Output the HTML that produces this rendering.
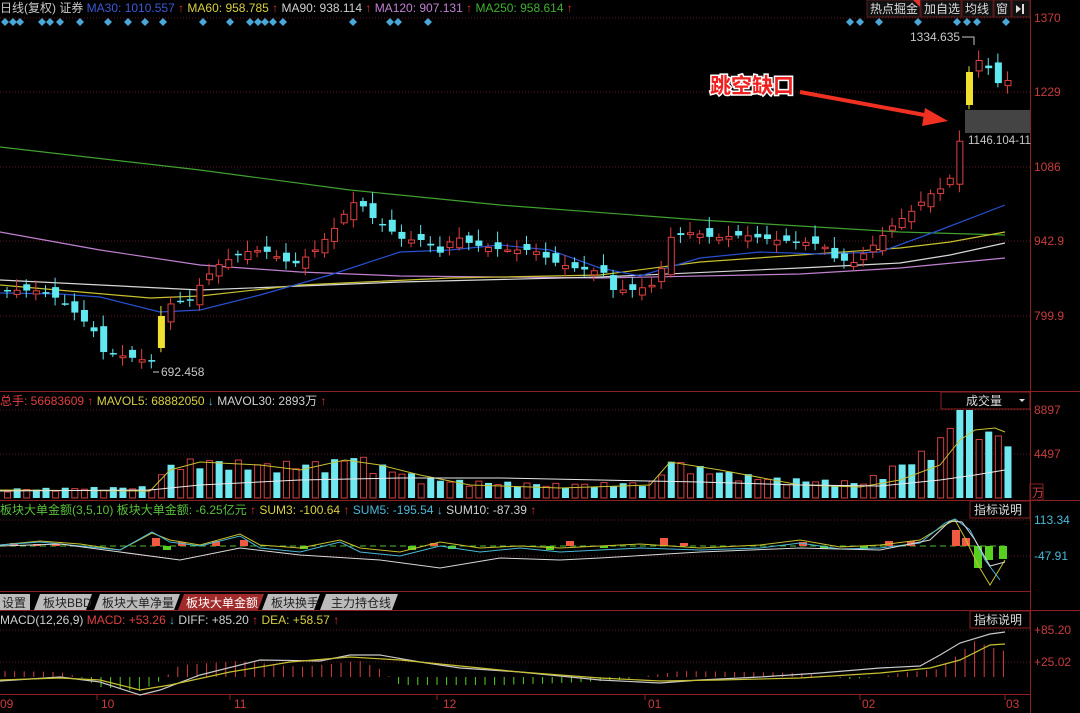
<!DOCTYPE html>
<html><head><meta charset="utf-8">
<style>
html,body{margin:0;padding:0;background:#000;width:1080px;height:713px;overflow:hidden}
svg{display:block;font-family:"Liberation Sans","Noto Sans CJK SC",sans-serif}
</style></head>
<body>
<svg id="s" width="1080" height="713" viewBox="0 0 1080 713" xmlns="http://www.w3.org/2000/svg">
<rect width="1080" height="713" fill="#000"/>
<g id="grid" stroke="#5a1a1a" stroke-dasharray="1,2" stroke-width="1">
<line x1="0" y1="18" x2="1030" y2="18"/><line x1="0" y1="92" x2="1030" y2="92"/>
<line x1="0" y1="167" x2="1030" y2="167"/><line x1="0" y1="241" x2="1030" y2="241"/>
<line x1="0" y1="316" x2="1030" y2="316"/>
<line x1="0" y1="410" x2="1030" y2="410"/><line x1="0" y1="454" x2="1030" y2="454"/>
<line x1="0" y1="520" x2="1030" y2="520"/><line x1="0" y1="556" x2="1030" y2="556"/>
<line x1="0" y1="630" x2="1030" y2="630"/><line x1="0" y1="662" x2="1030" y2="662"/>
</g>
<g stroke="#8a2020" stroke-width="1" fill="none">
<line x1="1030.5" y1="0" x2="1030.5" y2="713"/>
<line x1="0" y1="391.5" x2="1080" y2="391.5"/>
<line x1="0" y1="500.5" x2="1080" y2="500.5"/>
<line x1="0" y1="591.5" x2="1030" y2="591.5"/>
<line x1="0" y1="610.5" x2="1080" y2="610.5"/>
<line x1="0" y1="694.5" x2="1030" y2="694.5"/>
<line x1="97" y1="694" x2="97" y2="700"/><line x1="230" y1="694" x2="230" y2="700"/>
<line x1="437" y1="694" x2="437" y2="700"/><line x1="645" y1="694" x2="645" y2="700"/>
<line x1="860" y1="694" x2="860" y2="700"/><line x1="1005" y1="694" x2="1005" y2="700"/>
</g>
<g id="ma" fill="none" stroke-width="1.2"></g>
<g id="cd"></g>
<g id="vol"></g>
<g id="ind"></g>
<g id="macd"></g>
<text y="12" font-size="12">
<tspan x="0" fill="#c8c8c8">日线(复权) 证券 </tspan><tspan fill="#3c5ad8">MA30: 1010.557</tspan><tspan fill="#e03030" font-weight="bold"> ↑ </tspan><tspan fill="#d8d040">MA60: 958.785</tspan><tspan fill="#e03030" font-weight="bold"> ↑ </tspan><tspan fill="#d0d0d0">MA90: 938.114</tspan><tspan fill="#e03030" font-weight="bold"> ↑ </tspan><tspan fill="#c080d0">MA120: 907.131</tspan><tspan fill="#e03030" font-weight="bold"> ↑ </tspan><tspan fill="#40b030">MA250: 958.614</tspan><tspan fill="#e03030" font-weight="bold"> ↑</tspan>
</text>
<g id="dia" fill="#4aa8d8"></g>
<g font-size="12" fill="#ddd">
<rect x="867" y="0" width="53" height="17" fill="#111" stroke="#5a1a1a"/><text x="870" y="13">热点掘金</text>
<path d="M913 0 h7 v7z" fill="#e03030"/>
<rect x="921" y="0" width="40" height="17" fill="#111" stroke="#5a1a1a"/><text x="924" y="13">加自选</text>
<rect x="962" y="0" width="31" height="17" fill="#111" stroke="#5a1a1a"/><text x="965" y="13">均线</text>
<rect x="994" y="0" width="17" height="17" fill="#111" stroke="#5a1a1a"/><text x="996" y="13">窗</text>
<rect x="1012" y="0" width="18" height="17" fill="#111" stroke="#5a1a1a"/>
<path d="M1016 5 l5 4 l-5 4z M1022 4 v10 h2 v-10z" fill="#ddd"/>
</g>
<g font-size="12" fill="#c83c3c">
<text x="1034" y="22">1370</text><text x="1034" y="96">1229</text><text x="1034" y="171">1086</text>
<text x="1034" y="245">942.9</text><text x="1034" y="320">799.9</text>
<text x="1034" y="414">8897</text><text x="1034" y="458">4497</text>
<text x="1032" y="497">万</text>
<text x="1034" y="524" fill="#4ab8d8">113.34</text><text x="1034" y="560" fill="#4ab8d8">-47.91</text>
<text x="1034" y="634">+85.20</text><text x="1034" y="666">+25.02</text>
</g>
<rect x="1030" y="484" width="13" height="16" fill="none" stroke="#8a2020"/>
<g font-size="12" fill="#c83c3c">
<text x="0" y="708">09</text><text x="101" y="708">10</text><text x="234" y="708">11</text>
<text x="443" y="708">12</text><text x="648" y="708">01</text><text x="862" y="708">02</text><text x="1006" y="708">03</text>
</g>
<text x="910" y="41" font-size="12" fill="#c8c8c8">1334.635</text>
<path d="M962 37 h12 v8" stroke="#c8c8c8" fill="none"/>
<text x="161" y="376" font-size="12" fill="#c8c8c8">692.458</text>
<path d="M159 372 h-6" stroke="#c8c8c8"/>
<rect x="965" y="110" width="65" height="23" fill="#444"/>
<text x="968" y="144" font-size="11.5" fill="#c8c8c8">1146.104-11</text>
<text x="710" y="93" font-size="21" font-weight="bold" fill="#f02020" stroke="#fff" stroke-width="3" paint-order="stroke" font-family="'Noto Sans CJK SC',sans-serif">跳空缺口</text>
<path d="M800 92 L930 116" stroke="#f03020" stroke-width="4"/>
<path d="M948 121 L925 108 L922 126 Z" fill="#f03020"/>
<text y="405" font-size="12"><tspan x="0" fill="#e04040">总手: 56683609</tspan><tspan fill="#e03030" font-weight="bold"> ↑ </tspan><tspan fill="#d8d040">MAVOL5: 68882050</tspan><tspan fill="#4ab8d8" font-weight="bold"> ↓ </tspan><tspan fill="#d0d0d0">MAVOL30: 2893万</tspan><tspan fill="#e03030" font-weight="bold"> ↑</tspan></text>
<rect x="941" y="392" width="89" height="17" fill="#000" stroke="#8a2020"/>
<text x="966" y="405" font-size="12" fill="#ddd">成交量</text><path d="M1019 399 h6 l-3 3z" fill="#ddd"/>
<text y="514" font-size="12"><tspan x="0" fill="#5ac03a">板块大单金额(3,5,10) 板块大单金额: -6.25亿元</tspan><tspan fill="#e03030" font-weight="bold"> ↑ </tspan><tspan fill="#d8d040">SUM3: -100.64</tspan><tspan fill="#e03030" font-weight="bold"> ↑ </tspan><tspan fill="#4ab8d8">SUM5: -195.54</tspan><tspan fill="#4ab8d8" font-weight="bold"> ↓ </tspan><tspan fill="#d0d0d0">SUM10: -87.39</tspan><tspan fill="#e03030" font-weight="bold"> ↑</tspan></text>
<rect x="970" y="501" width="60" height="17" fill="#000" stroke="#8a2020"/><text x="974" y="514" font-size="12" fill="#ddd">指标说明</text>
<rect x="970" y="611" width="60" height="17" fill="#000" stroke="#8a2020"/><text x="974" y="624" font-size="12" fill="#ddd">指标说明</text>
<g font-size="12">
<rect x="0" y="594" width="30" height="16" fill="#bbb"/><text x="2" y="607" fill="#222">设置</text>
<path d="M34 610 l6 -16 h52 l-6 16z" fill="#bbb"/><text x="43" y="607" fill="#222">板块BBD</text>
<path d="M94 610 l6 -16 h80 l-6 16z" fill="#bbb"/><text x="102" y="607" fill="#222">板块大单净量</text>
<path d="M178 610 l6 -16 h80 l-6 16z" fill="#a02a2a"/><text x="186" y="607" fill="#fff">板块大单金额</text>
<path d="M262 610 l6 -16 h52 l-6 16z" fill="#bbb"/><text x="271" y="607" fill="#222">板块换手</text>
<path d="M320 610 l6 -16 h72 l-6 16z" fill="#bbb"/><text x="331" y="607" fill="#222">主力持仓线</text>
</g>
<text y="624" font-size="12"><tspan x="0" fill="#d0d0d0">MACD(12,26,9) </tspan><tspan fill="#e04040">MACD: +53.26</tspan><tspan fill="#4ab8d8" font-weight="bold"> ↓ </tspan><tspan fill="#d0d0d0">DIFF: +85.20</tspan><tspan fill="#e03030" font-weight="bold"> ↑ </tspan><tspan fill="#d8d040">DEA: +58.57</tspan><tspan fill="#e03030" font-weight="bold"> ↑</tspan></text>
</svg>
<script>
var NS="http://www.w3.org/2000/svg";
function el(p,t,a){var e=document.createElementNS(NS,t);for(var k in a)e.setAttribute(k,a[k]);p.appendChild(e);return e;}
function interp(pts,x){for(var i=0;i<pts.length-1;i++){if(x<=pts[i+1][0]){var a=pts[i],b=pts[i+1];return a[1]+(b[1]-a[1])*(x-a[0])/(b[0]-a[0]);}}return pts[pts.length-1][1];}
function poly(g,pts,c,w){el(g,"polyline",{points:pts.map(function(p){return p.join(",")}).join(" "),stroke:c,"stroke-width":w||1.2,fill:"none"});}
var dg=document.getElementById("dia");
[5,13,20,42,50,60,80,108,128,145,163,203,230,250,258,265,273,283,353,390,398,428,850,860,879,918,957,967,977,1006].forEach(function(x){el(dg,"path",{d:"M"+x+" 18 l4 4 l-4 4 l-4 -4z"});});
var mg=document.getElementById("ma");
poly(mg,[[0,147],[200,170],[350,190],[500,205],[700,220],[900,232],[1005,235]],"#40a030");
poly(mg,[[0,232],[100,250],[200,265],[300,272],[400,276],[600,278],[800,274],[900,268],[1005,258]],"#c080d0");
poly(mg,[[0,280],[200,290],[400,282],[600,277],[800,268],[900,263],[950,255],[1005,243]],"#d8d8d8");
poly(mg,[[0,285],[150,298],[200,296],[300,285],[450,278],[600,275],[700,262],[800,255],[900,248],[950,242],[1005,232]],"#c8c030");
poly(mg,[[0,293],[60,294],[100,297],[160,312],[200,310],[260,295],[330,275],[400,252],[450,250],[500,245],[550,250],[600,268],[640,276],[660,270],[700,258],[760,252],[820,254],[880,252],[940,230],[1005,205]],"#2850d0");
var cl=[[4,290],[40,291],[60,302],[90,330],[100,352],[130,358],[150,362],[160,316],[170,300],[185,302],[200,280],[215,265],[240,252],[260,250],[290,265],[310,252],[330,230],[345,208],[355,198],[365,215],[380,225],[400,240],[420,240],[440,255],[450,235],[470,245],[500,250],[530,250],[550,262],[570,268],[600,272],[610,290],[630,290],[650,285],[660,265],[665,238],[690,232],[710,238],[740,235],[770,240],[800,242],[820,245],[830,258],[850,263],[870,245],[890,225],[910,210],[925,195],[945,185],[958,135],[968,90],[975,60],[990,72],[997,88],[1005,80]];
var cg=document.getElementById("cd");
var prev=290,N=105,sp=9.62;
for(var i=0;i<N;i++){var x=4+i*sp;if(x>1008)break;var c=interp(cl,x);
 var o=prev+Math.sin(i*2.3)*6;
 if(i==16){o=348;c=316;}
 if(x>964&&x<972){o=105;c=72;}
 var hi=Math.min(o,c)-3-Math.abs(Math.sin(i*1.7))*8, lo=Math.max(o,c)+2+Math.abs(Math.cos(i*1.3))*6;
 var up=c<o, col=(i==16||(x>964&&x<972))?"#f0e030":(up?"#e04040":"#60e8f0");
 el(cg,"line",{x1:x+3,y1:hi,x2:x+3,y2:lo,stroke:col});
 var t=Math.min(o,c),h=Math.max(Math.abs(o-c),1.5);
 if(up&&col=="#e04040")el(cg,"rect",{x:x+0.5,y:t,width:6,height:h,fill:"#000",stroke:col});
 else el(cg,"rect",{x:x,y:t,width:7,height:h,fill:col});
 prev=c;}
var vg=document.getElementById("vol");
var vh=[[0,8],[150,10],[165,30],[200,34],[260,30],[330,32],[345,40],[380,28],[420,18],[460,15],[560,12],[650,14],[665,34],[700,26],[760,18],[860,14],[880,24],[920,40],[940,55],[955,75],[965,90],[975,68],[990,55],[1005,58]];
for(var i=0;i<N;i++){var x=4+i*sp;if(x>1008)break;var h=interp(vh,x)*(0.75+0.45*Math.abs(Math.sin(i*1.9)));
 var up=Math.sin(i*2.3)<0.1; if(x>955&&x<972){h=88;up=false;}
 if(up)el(vg,"rect",{x:x+0.5,y:498-h,width:6,height:h,fill:"#000",stroke:"#d04040"});
 else el(vg,"rect",{x:x,y:498-h,width:7,height:h,fill:"#70e8f0"});}
poly(vg,[[0,490],[150,491],[170,470],[200,462],[260,465],[300,470],[345,460],[380,465],[420,475],[470,485],[560,488],[650,485],[670,462],[720,470],[800,485],[860,487],[900,480],[940,465],[960,440],[975,430],[995,428],[1005,432]],"#c8c030",1);
poly(vg,[[0,491],[150,490],[200,485],[300,480],[400,478],[500,478],[600,480],[700,482],[800,485],[880,486],[940,480],[975,475],[1005,470]],"#e8e8e8",1);
var ig=document.getElementById("ind");
el(ig,"line",{x1:0,y1:546,x2:1005,y2:546,stroke:"#50c030","stroke-dasharray":"6,4"});
[[10,-3],[33,-2],[52,-2],[152,-8],[163,4],[178,-4],[212,-5],[240,-6],[300,3],[408,4],[430,-3],[448,3],[546,4],[566,-5],[600,2],[660,-8],[680,-3],[799,-4],[820,3],[860,3],[885,-5],[907,-5],[952,-16],[962,-8],[974,22],[985,14],[999,13]].forEach(function(b){var c=b[1]<0?"#f05a40":"#58d020";el(ig,"rect",{x:b[0],y:b[1]<0?546+b[1]:546,width:8,height:Math.abs(b[1]),fill:c});});
poly(ig,[[0,545],[40,541],[80,544],[120,550],[152,533],[170,540],[200,545],[240,534],[260,545],[300,548],[340,540],[360,548],[400,552],[440,542],[480,548],[520,546],[560,548],[600,546],[640,544],[700,548],[760,545],[800,540],[840,547],[880,545],[920,540],[945,525],[955,520],[965,538],[978,565],[990,585],[1005,560]],"#c8c030",1);
poly(ig,[[0,545],[40,542],[80,546],[120,550],[152,532],[170,542],[200,546],[240,536],[260,548],[300,552],[340,542],[360,552],[400,556],[440,546],[480,552],[520,548],[560,552],[600,550],[640,548],[700,550],[760,548],[800,543],[840,549],[880,548],[920,543],[945,523],[955,519],[970,530],[985,560],[1000,580]],"#4ab8d8",1);
poly(ig,[[0,546],[60,544],[120,552],[180,560],[240,548],[300,555],[380,560],[440,568],[500,558],[560,560],[600,558],[700,552],[800,548],[880,550],[930,540],[950,521],[962,522],[975,540],[990,566],[1005,562]],"#d8d8d8",1);
var kg=document.getElementById("macd");
for(var i=0;i<N;i++){var x=5+i*9.6;if(x>1008)break;
 var v=interp([[0,6],[60,5],[80,0],[100,-10],[140,-14],[160,-4],[180,12],[240,16],[300,10],[360,16],[380,8],[390,0],[400,-8],[500,-8],[560,-6],[620,-3],[640,0],[680,6],[800,4],[850,-2],[880,0],[900,4],[940,8],[960,24],[975,36],[990,30],[1005,26]],x);
 var c=v>=0?"#d04040":"#58d020";el(kg,"line",{x1:x,y1:677,x2:x,y2:677-v,stroke:c});}
poly(kg,[[0,681],[60,677],[100,682],[140,695],[160,690],[200,675],[260,660],[320,661],[350,655],[380,655],[420,662],[460,668],[520,672],[600,680],[660,683],[700,680],[760,677],[820,673],[880,668],[920,666],[940,655],[960,643],[990,634],[1005,632]],"#c8c8c8",1.2);
poly(kg,[[0,680],[60,678],[100,680],[140,690],[170,685],[230,672],[290,662],[350,657],[400,660],[460,666],[520,672],[600,678],[660,681],[720,680],[800,678],[880,673],[930,668],[960,660],[990,645],[1005,644]],"#c8c030",1.2);
</script>
</body></html>
